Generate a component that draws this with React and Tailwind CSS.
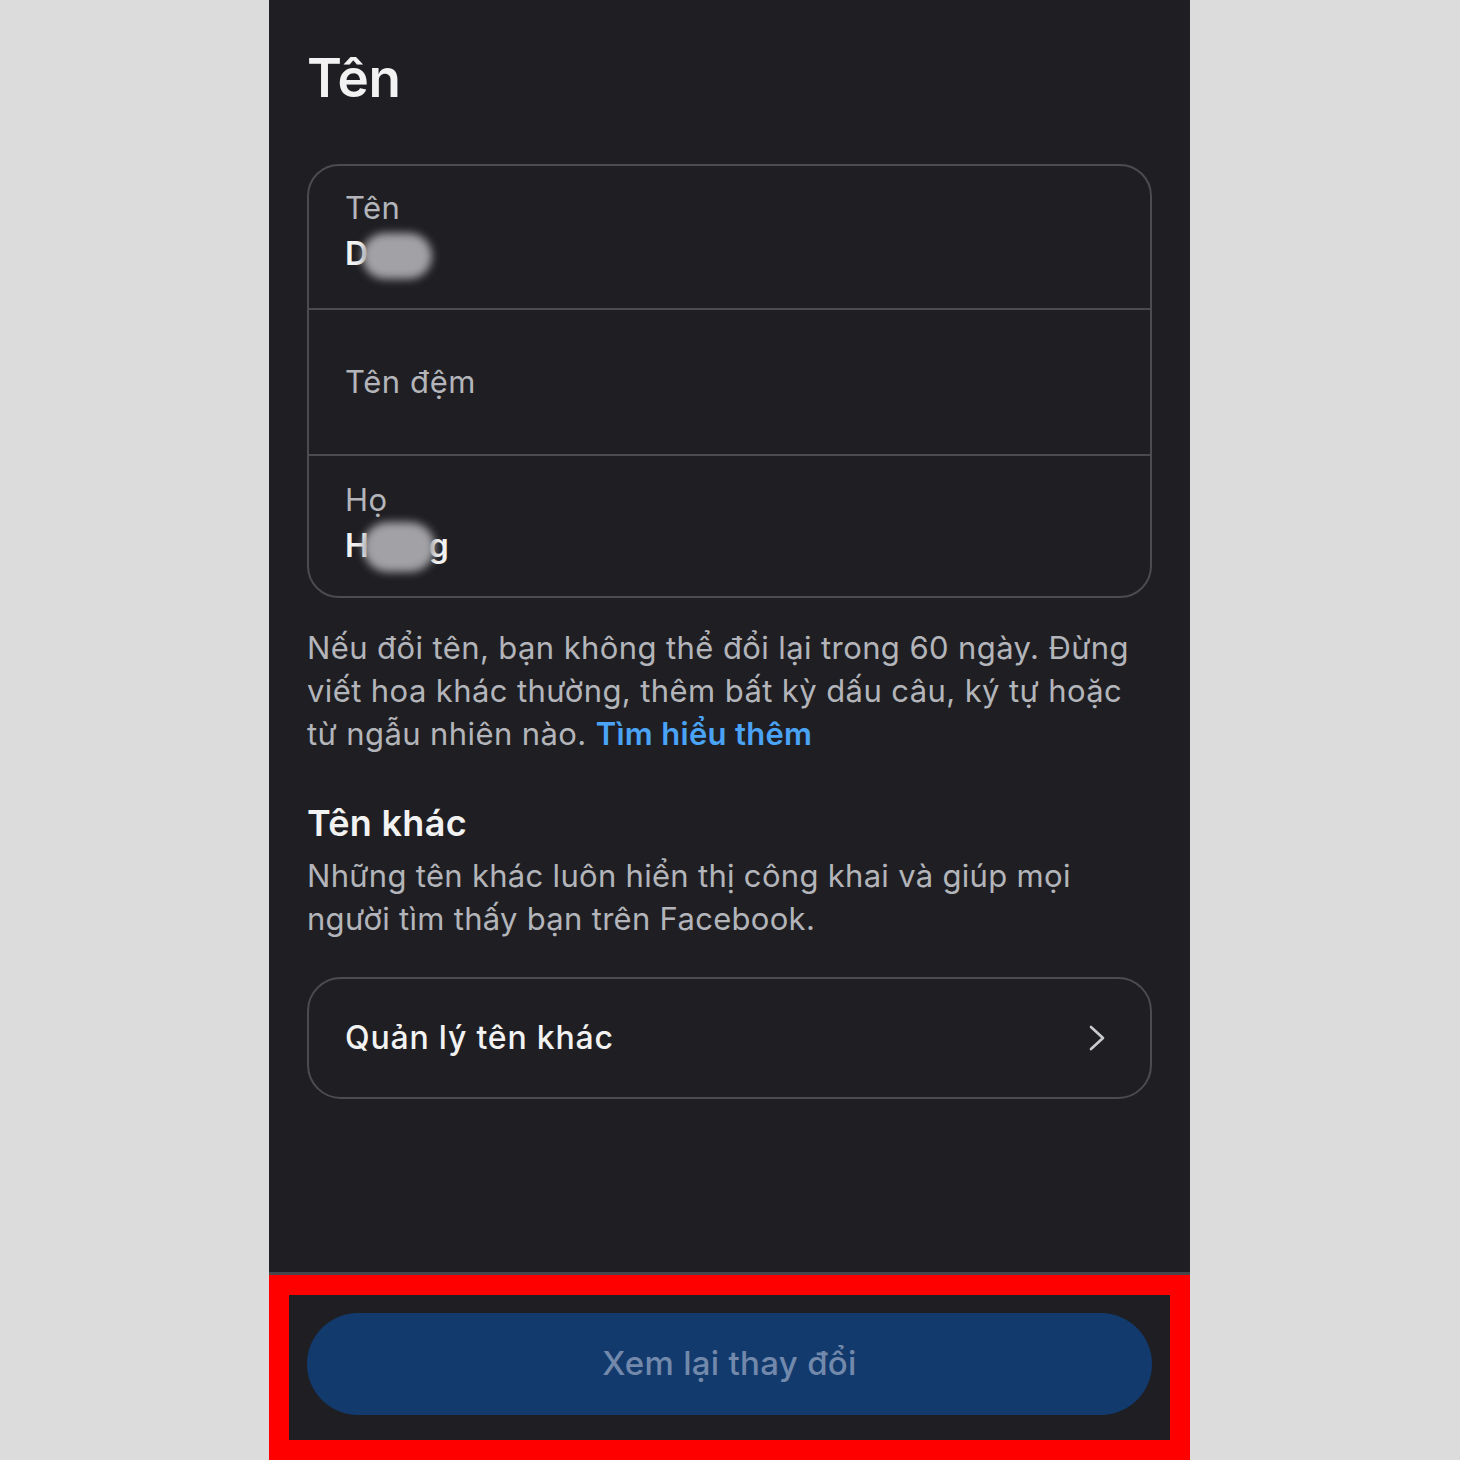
import React from "react";

function Blob({ w = 68, h = 46 }) {
  return (
    <span className="relative inline-block align-middle" style={{ width: w, height: h }}>
      <span className="absolute inset-0 rounded-full bg-[#a2a2a6] blur-[4px]" />
    </span>
  );
}

export default function App() {
  return (
    <div
      className="w-full h-[1460px] bg-[#dcdcdc] flex pl-[269px] overflow-hidden"
      style={{ fontFamily: "Inter, 'Noto Sans', sans-serif" }}
    >
      <div className="w-[921px] h-full bg-[#1f1f23] flex flex-col">
        <div className="px-[38px] pt-[45px] flex flex-col">
          <h1 className="text-[53px] leading-[66px] font-semibold text-[#f2f2f2] tracking-[-0.3px]">Tên</h1>

          <div className="mt-[53px] h-[434px] border-2 border-[#4b4b50] rounded-[32px] flex flex-col">
            <div className="h-[142px] flex flex-col px-[36px] pt-[22px]">
              <div className="text-[31px] leading-[40px] text-[#b3b5ba] tracking-[0.4px]">Tên</div>
              <div className="flex items-center h-[52px] text-[32px] font-semibold text-[#f2f2f2]">
                <span>D</span>
                <span className="-ml-[6px]"><Blob w={70} h={46} /></span>
              </div>
            </div>
            <div className="border-t-2 border-[#4b4b50] h-[146px] flex items-center px-[36px]">
              <div className="text-[31px] leading-[40px] text-[#b3b5ba] tracking-[0.6px]">Tên đệm</div>
            </div>
            <div className="border-t-2 border-[#4b4b50] h-[142px] flex flex-col px-[36px] pt-[24px]">
              <div className="text-[31px] leading-[40px] text-[#b3b5ba] tracking-[0.4px]">Họ</div>
              <div className="flex items-center h-[52px] text-[32px] font-semibold text-[#f2f2f2]">
                <span>H</span>
                <span className="-ml-[6px]"><Blob w={72} h={50} /></span>
                <span className="-ml-[6px]">g</span>
              </div>
            </div>
          </div>

          <p className="mt-[28px] text-[31px] leading-[43px] text-[#b3b5ba] tracking-[0.4px] whitespace-nowrap">
            Nếu đổi tên, bạn không thể đổi lại trong 60 ngày. Đừng
            <br />
            viết hoa khác thường, thêm bất kỳ dấu câu, ký tự hoặc
            <br />
            từ ngẫu nhiên nào. <span className="font-semibold text-[#4aa3f5] tracking-[0.3px]">Tìm hiểu thêm</span>
          </p>

          <h2 className="mt-[45px] text-[36px] leading-[46px] font-semibold text-[#f2f2f2] tracking-[0.3px]">Tên khác</h2>
          <p className="mt-[8px] text-[31px] leading-[43px] text-[#b3b5ba] tracking-[0.3px] whitespace-nowrap">
            Những tên khác luôn hiển thị công khai và giúp mọi
            <br />
            người tìm thấy bạn trên Facebook.
          </p>

          <div className="mt-[37px] h-[122px] border-2 border-[#4b4b50] rounded-[34px] flex items-center justify-between pl-[36px] pr-[44px]">
            <span className="text-[32px] font-medium text-[#f2f2f2] tracking-[0.8px]">Quản lý tên khác</span>
            <svg width="18" height="26" viewBox="0 0 18 26" fill="none">
              <polyline points="3,2 15,13 3,24" stroke="#c9cacd" strokeWidth="2.6" strokeLinecap="round" strokeLinejoin="round" />
            </svg>
          </div>
        </div>

        <div className="flex-1" />

        <div className="h-[3px] bg-[#47474b]" />
        <div className="h-[185px] border-[20px] border-[#ff0000] bg-[#1f1f23] px-[18px] pt-[18px]">
          <div className="h-[102px] rounded-full bg-[#133a6d] flex items-center justify-center">
            <span className="text-[33px] font-medium text-[#7289ab] tracking-[0.3px]">Xem lại thay đổi</span>
          </div>
        </div>
      </div>
    </div>
  );
}
